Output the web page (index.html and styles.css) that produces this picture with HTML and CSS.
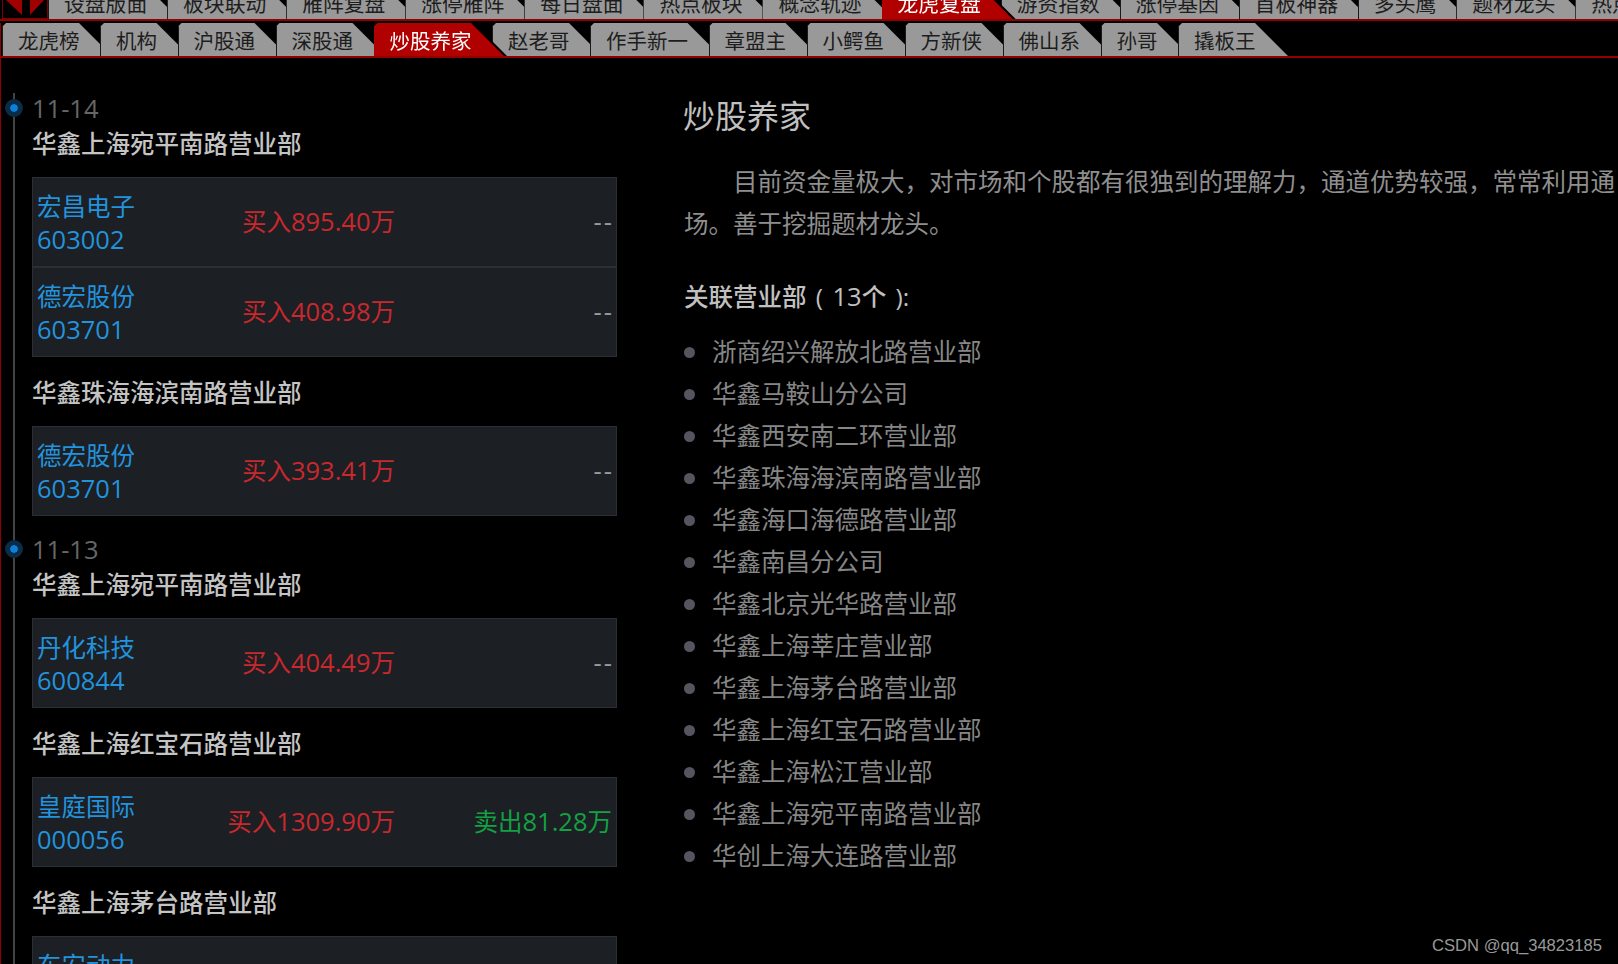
FILE: index.html
```html
<!DOCTYPE html>
<html lang="zh-CN">
<head>
  <meta charset="UTF-8" />
  <meta name="viewport" content="width=device-width, initial-scale=1.0">
  <title>龙虎复盘 | 炒股养家</title>
  <link rel="stylesheet" href="styles.css">
</head>
<body>
  <nav class="main-nav">
    <div class="nav-arrows">
      <svg width="42" height="17" viewBox="0 0 42 17"><path d="M1 0H17V15Z M39 0H25V15Z" fill="#a00000"/></svg>
    </div>
    <ul class="tabs">
      <li class="tab">设盘版面</li>
      <li class="tab">板块联动</li>
      <li class="tab">雁阵复盘</li>
      <li class="tab">涨停雁阵</li>
      <li class="tab">每日盘面</li>
      <li class="tab">热点板块</li>
      <li class="tab">概念轨迹</li>
      <li class="tab active">龙虎复盘</li>
      <li class="tab">游资指数</li>
      <li class="tab">涨停基因</li>
      <li class="tab">首板神器</li>
      <li class="tab">多头鹰</li>
      <li class="tab">题材龙头</li>
      <li class="tab">热点龙头</li>
    </ul>
  </nav>

  <nav class="sub-nav">
    <ul class="tabs">
      <li class="tab">龙虎榜</li>
      <li class="tab">机构</li>
      <li class="tab">沪股通</li>
      <li class="tab">深股通</li>
      <li class="tab active">炒股养家</li>
      <li class="tab">赵老哥</li>
      <li class="tab">作手新一</li>
      <li class="tab">章盟主</li>
      <li class="tab">小鳄鱼</li>
      <li class="tab">方新侠</li>
      <li class="tab">佛山系</li>
      <li class="tab">孙哥</li>
      <li class="tab">撬板王</li>
    </ul>
  </nav>

  <main class="content">
    <section class="timeline">
      <div class="day">
        <div class="date num">11-14</div>
        <h3 class="branch">华鑫上海宛平南路营业部</h3>
        <div class="card">
          <div class="trade">
            <a class="stock">宏昌电子<br><span class="num">603002</span></a>
            <span class="buy">买入<span class="num">895.40</span>万</span>
            <span class="sell none num">--</span>
          </div>
          <div class="trade">
            <a class="stock">德宏股份<br><span class="num">603701</span></a>
            <span class="buy">买入<span class="num">408.98</span>万</span>
            <span class="sell none num">--</span>
          </div>
        </div>
        <h3 class="branch">华鑫珠海海滨南路营业部</h3>
        <div class="card">
          <div class="trade">
            <a class="stock">德宏股份<br><span class="num">603701</span></a>
            <span class="buy">买入<span class="num">393.41</span>万</span>
            <span class="sell none num">--</span>
          </div>
        </div>
      </div>

      <div class="day">
        <div class="date num">11-13</div>
        <h3 class="branch">华鑫上海宛平南路营业部</h3>
        <div class="card">
          <div class="trade">
            <a class="stock">丹化科技<br><span class="num">600844</span></a>
            <span class="buy">买入<span class="num">404.49</span>万</span>
            <span class="sell none num">--</span>
          </div>
        </div>
        <h3 class="branch">华鑫上海红宝石路营业部</h3>
        <div class="card">
          <div class="trade">
            <a class="stock">皇庭国际<br><span class="num">000056</span></a>
            <span class="buy">买入<span class="num">1309.90</span>万</span>
            <span class="sell">卖出<span class="num">81.28</span>万</span>
          </div>
        </div>
        <h3 class="branch">华鑫上海茅台路营业部</h3>
        <div class="card">
          <div class="trade">
            <a class="stock">东安动力<br><span class="num">600178</span></a>
          </div>
        </div>
      </div>
    </section>

    <section class="profile">
      <h1>炒股养家</h1>
      <p class="intro">目前资金量极大，对市场和个股都有很独到的理解力，通道优势较强，常常利用通<br>场。善于挖掘题材龙头。</p>
      <h4>关联营业部 ( <span class="num">13</span>个 ):</h4>
      <ul class="branch-list">
        <li>浙商绍兴解放北路营业部</li>
        <li>华鑫马鞍山分公司</li>
        <li>华鑫西安南二环营业部</li>
        <li>华鑫珠海海滨南路营业部</li>
        <li>华鑫海口海德路营业部</li>
        <li>华鑫南昌分公司</li>
        <li>华鑫北京光华路营业部</li>
        <li>华鑫上海莘庄营业部</li>
        <li>华鑫上海茅台路营业部</li>
        <li>华鑫上海红宝石路营业部</li>
        <li>华鑫上海松江营业部</li>
        <li>华鑫上海宛平南路营业部</li>
        <li>华创上海大连路营业部</li>
      </ul>
    </section>
  </main>

  <div class="watermark">CSDN @qq_34823185</div>
</body>
</html>
```

FILE: styles.css
```css
* {
  box-sizing: border-box;
}

html,
body {
  height: 100%;
}

body {
  margin: 0;
  overflow: hidden;
  background: #000;
  color: #999;
  font-family: "Open Sans", "Noto Sans CJK SC", sans-serif;
  font-size: 24.5px;
}

ul {
  margin: 0;
  padding: 0;
  list-style: none;
}

h1,
h3,
h4,
p {
  margin: 0;
}

/* digits run a little larger than the chinese text */
.num {
  font-size: 25.5px;
}

/* tab bars */
.main-nav,
.sub-nav {
  display: flex;
  border-bottom: 2px solid #930000;
}

.main-nav {
  height: 21px;
  align-items: flex-end;
  padding-left: 2px;
}

.sub-nav {
  height: 35px;
  margin-top: 2px;
  padding-left: 1px;
  border-left: 1px solid #930000;
}

.nav-arrows {
  flex: none;
  width: 46px;
  height: 19px;
  padding-left: 2px;
  border: 1px solid #7a0000;
  border-top: none;
  overflow: hidden;
}

.nav-arrows svg {
  display: block;
}

.tabs {
  display: flex;
  align-items: flex-end;
  white-space: nowrap;
}

.tab {
  position: relative;
  z-index: 1;
  flex: none;
  height: 33px;
  margin-right: -12px;
  padding: 0 32.5px 0 16px;
  color: #1d1d1d;
  font-family: "Noto Sans CJK SC", sans-serif;
  font-size: 20.5px;
  line-height: 34px;
}

.main-nav .tab {
  padding-right: 31.9px;
  font-size: 20.8px;
}

.tab::before {
  content: "";
  position: absolute;
  inset: 0;
  z-index: -1;
  background: #999;
  border-left: 1px solid #1a1a1a;
  clip-path: polygon(0 4px, 4px 0, calc(100% - 33px) 0, 100% 100%, 0 100%);
}

.tab.active {
  z-index: 2;
  color: #fff;
  filter: drop-shadow(3px 0 0 #000);
}

.tab.active::before {
  background: #b00000;
  border-left-color: #b00000;
}

/* page body */
.content {
  display: flex;
  height: calc(100% - 58px);
  border-left: 1px solid #930000;
}

.timeline {
  flex: none;
  width: 683px;
  padding: 35px 0 0 12px;
}

.day {
  padding: 0 0 18px 17px;
  border-left: 2px solid #444;
}

.date {
  position: relative;
  height: 30px;
  margin-bottom: 2px;
  color: #666;
  line-height: 30px;
}

/* dot on the time line */
.date::before {
  content: "";
  position: absolute;
  left: -27px;
  top: 6px;
  width: 8px;
  height: 8px;
  border: 5px solid #0a2c47;
  border-radius: 50%;
  background: #0a80d8;
  background-clip: padding-box;
}

.branch {
  height: 36px;
  margin-bottom: 16px;
  color: #c4c4c4;
  font-family: "Noto Sans CJK SC", sans-serif;
  font-size: 24.5px;
  font-weight: 500;
  line-height: 36px;
}

.card {
  width: 585px;
  margin-bottom: 17px;
  background: #1c1f24;
  border: 1px solid #2b2e33;
}

.card:last-child {
  margin-bottom: 0;
}

.trade {
  display: grid;
  grid-template-columns: 190px 168px 1fr;
  align-items: center;
  height: 90px;
  padding: 0 4px;
  border-bottom: 2px solid #2b2e33;
}

.trade:last-child {
  height: 88px;
  border-bottom: none;
}

.stock {
  margin-top: 2px;
  color: #2293dc;
  line-height: 33px;
}

.buy,
.sell {
  margin-bottom: 3px;
  text-align: right;
  white-space: nowrap;
}

.buy {
  color: #c9282d;
}

.sell {
  color: #12a143;
}

.sell.none {
  margin-right: -2px;
  color: #999;
  letter-spacing: 2px;
}

/* right side */
.profile {
  flex: none;
  width: 934px;
  padding-top: 35px;
  overflow: hidden;
  white-space: nowrap;
}

.profile h1 {
  height: 42px;
  margin-left: -1px;
  color: #c0c0c0;
  font-family: "Noto Sans CJK SC", sans-serif;
  font-size: 32px;
  font-weight: 400;
  line-height: 42px;
}

.intro {
  margin-top: 26px;
  color: #8f8f8f;
  line-height: 42px;
  text-indent: 2em;
}

.profile h4 {
  margin-top: 30px;
  color: #c0c0c0;
  font-size: 24.5px;
  font-weight: 500;
  line-height: 42px;
  word-spacing: 3px;
}

.branch-list {
  margin-top: 13px;
  padding-left: 28px;
}

.branch-list li {
  position: relative;
  color: #868686;
  line-height: 42px;
}

.branch-list li::before {
  content: "";
  position: absolute;
  left: -28px;
  top: 16px;
  width: 11px;
  height: 11px;
  border-radius: 50%;
  background: #55555f;
}

.watermark {
  position: absolute;
  right: 16px;
  bottom: 8px;
  color: #999;
  font-family: "Liberation Sans", sans-serif;
  font-size: 16.6px;
}
```
